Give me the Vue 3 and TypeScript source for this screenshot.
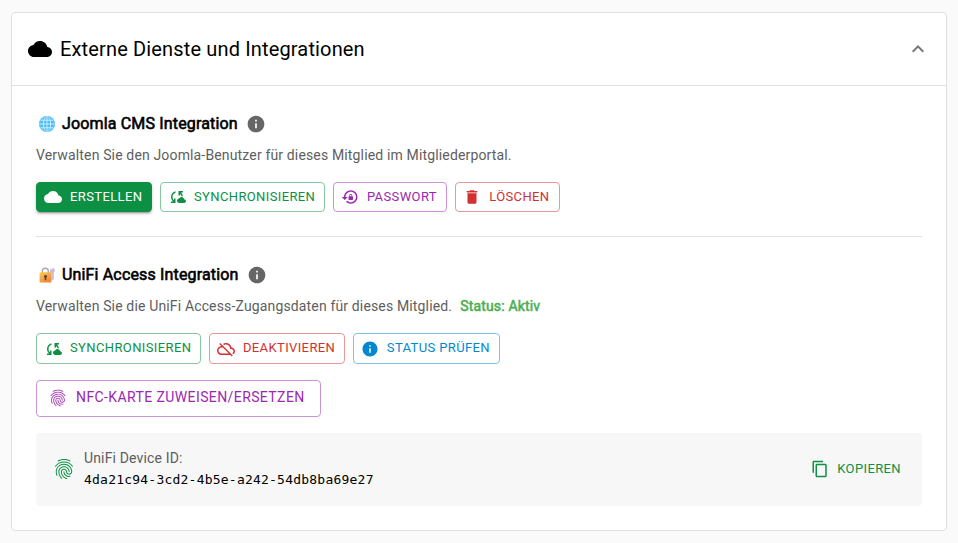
<script setup lang="ts">
import { ref } from 'vue'

interface Action {
  label: string
  icon: string
  tone: string
}

const icons: Record<string, string> = {
  cloud: 'M19.35 10.04C18.67 6.59 15.64 4 12 4 9.11 4 6.6 5.64 5.35 8.04 2.34 8.36 0 10.91 0 14c0 3.31 2.69 6 6 6h13c2.76 0 5-2.24 5-5 0-2.64-2.05-4.78-4.65-4.96z',
  sync: 'M21.5 14.98c-.02 0-.03 0-.05.01C21.2 13.3 19.76 12 18 12c-1.4 0-2.6.83-3.16 2.02C13.26 14.1 12 15.4 12 17c0 1.66 1.34 3 3 3l6.5-.02c1.38 0 2.5-1.12 2.5-2.5s-1.12-2.5-2.5-2.5zM10 4.26v2.09C7.67 7.18 6 9.39 6 12c0 1.77.78 3.34 2 4.44V14h2v6H4v-2h2.73C5.06 16.54 4 14.4 4 12c0-3.73 2.55-6.85 6-7.74zM20 6h-2.73c1.43 1.26 2.41 3.01 2.66 5h-2.02c-.23-1.36-.93-2.55-1.91-3.44V10h-2V4h6v2z',
  lockReset: 'M13 3c-4.97 0-9 4.03-9 9H1l4 4 4-4H6c0-3.86 3.14-7 7-7s7 3.14 7 7-3.14 7-7 7c-1.9 0-3.62-.76-4.88-1.99L6.7 18.42C8.32 20.01 10.55 21 13 21c4.97 0 9-4.03 9-9s-4.03-9-9-9zm2 8v-1c0-1.1-.9-2-2-2s-2 .9-2 2v1c-.55 0-1 .45-1 1v3c0 .55.45 1 1 1h4c.55 0 1-.45 1-1v-3c0-.55-.45-1-1-1zm-1 0h-2v-1c0-.55.45-1 1-1s1 .45 1 1v1z',
  trash: 'M6 19c0 1.1.9 2 2 2h8c1.1 0 2-.9 2-2V7H6v12zM19 4h-3.5l-1-1h-5l-1 1H5v2h14V4z',
  cloudOff: 'M19.35 10.04C18.67 6.59 15.64 4 12 4c-1.48 0-2.85.43-4.01 1.17l1.46 1.46C10.21 6.23 11.08 6 12 6c3.04 0 5.5 2.46 5.5 5.5v.5H19c1.66 0 3 1.34 3 3 0 1.13-.64 2.11-1.56 2.62l1.45 1.45C23.16 18.16 24 16.68 24 15c0-2.64-2.05-4.78-4.65-4.96zM3 5.27l2.75 2.74C2.56 8.15 0 10.77 0 14c0 3.31 2.69 6 6 6h11.73l2 2L21 20.73 4.27 4 3 5.27zM7.73 10l8 8H6c-2.21 0-4-1.79-4-4s1.79-4 4-4h1.73z',
  info: 'M12 2C6.48 2 2 6.48 2 12s4.48 10 10 10 10-4.48 10-10S17.52 2 12 2zm1 15h-2v-6h2v6zm0-8h-2V7h2v2z',
  fingerprint: 'M17.81 4.47c-.08 0-.16-.02-.23-.06C15.66 3.42 14 3 12.01 3c-1.98 0-3.86.47-5.57 1.41-.24.13-.54.04-.68-.2-.13-.24-.04-.55.2-.68C7.82 2.52 9.86 2 12.01 2c2.13 0 3.99.47 6.03 1.52.25.13.34.43.21.67-.09.18-.26.28-.44.28zM3.5 9.72c-.1 0-.2-.03-.29-.09-.23-.16-.28-.47-.12-.7.99-1.4 2.25-2.5 3.75-3.27C9.98 4.04 14 4.03 17.15 5.65c1.5.77 2.76 1.86 3.75 3.25.16.22.11.54-.12.7-.23.16-.54.11-.7-.12-.9-1.26-2.04-2.25-3.39-2.94-2.87-1.47-6.54-1.47-9.4.01-1.36.7-2.5 1.7-3.4 2.96-.08.14-.23.21-.39.21zm6.25 12.07c-.13 0-.26-.05-.35-.15-.87-.87-1.34-1.43-2.01-2.64-.69-1.23-1.05-2.73-1.05-4.34 0-2.97 2.54-5.39 5.66-5.39s5.66 2.42 5.66 5.39c0 .28-.22.5-.5.5s-.5-.22-.5-.5c0-2.42-2.09-4.39-4.66-4.39-2.57 0-4.66 1.97-4.66 4.39 0 1.44.32 2.77.93 3.85.64 1.15 1.08 1.64 1.85 2.42.19.2.19.51 0 .71-.11.1-.24.15-.37.15zm7.17-1.85c-1.19 0-2.24-.3-3.1-.89-1.49-1.01-2.38-2.65-2.38-4.39 0-.28.22-.5.5-.5s.5.22.5.5c0 1.41.72 2.74 1.94 3.56.71.48 1.54.71 2.54.71.24 0 .64-.03 1.04-.1.27-.05.53.13.58.41.05.27-.13.53-.41.58-.57.11-1.07.12-1.21.12zM14.91 22c-.04 0-.09-.01-.13-.02-1.59-.44-2.63-1.03-3.72-2.1-1.4-1.39-2.17-3.24-2.17-5.22 0-1.62 1.38-2.94 3.08-2.94 1.7 0 3.08 1.32 3.08 2.94 0 1.07.93 1.94 2.08 1.94s2.08-.87 2.08-1.94c0-3.77-3.25-6.83-7.25-6.83-2.84 0-5.44 1.58-6.61 4.03-.39.81-.59 1.76-.59 2.8 0 .78.07 2.01.67 3.61.1.26-.03.55-.29.64-.26.1-.55-.04-.64-.29-.49-1.31-.73-2.61-.73-3.96 0-1.2.23-2.29.68-3.24 1.33-2.79 4.28-4.6 7.51-4.6 4.55 0 8.25 3.51 8.25 7.83 0 1.62-1.38 2.94-3.08 2.94s-3.08-1.32-3.08-2.94c0-1.07-.93-1.94-2.08-1.94s-2.08.87-2.08 1.94c0 1.71.66 3.31 1.87 4.51.95.94 1.86 1.46 3.27 1.85.27.07.42.35.35.61-.05.23-.26.38-.47.38z',
  copy: 'M16 1H4c-1.1 0-2 .9-2 2v14h2V3h12V1zm3 4H8c-1.1 0-2 .9-2 2v14c0 1.1.9 2 2 2h11c1.1 0 2-.9 2-2V7c0-1.1-.9-2-2-2zm0 16H8V7h11v14z',
  expandLess: 'm12 8-6 6 1.41 1.41L12 10.83l4.59 4.58L18 14z',
}

const joomlaActions: Action[] = [
  { label: 'Erstellen', icon: 'cloud', tone: 'solid' },
  { label: 'Synchronisieren', icon: 'sync', tone: 'green' },
  { label: 'Passwort', icon: 'lockReset', tone: 'purple' },
  { label: 'Löschen', icon: 'trash', tone: 'red' },
]

const unifiActions: Action[] = [
  { label: 'Synchronisieren', icon: 'sync', tone: 'green' },
  { label: 'Deaktivieren', icon: 'cloudOff', tone: 'red' },
  { label: 'Status prüfen', icon: 'info', tone: 'blue' },
]

const deviceId = ref('4da21c94-3cd2-4b5e-a242-54db8ba69e27')
const open = ref(true)
</script>

<template>
  <main class="page">
    <section class="card">
      <header class="card-header" @click="open = !open">
        <svg class="icon-24" viewBox="0 0 24 24"><path :d="icons.cloud" /></svg>
        <h2 class="card-title">Externe Dienste und Integrationen</h2>
        <svg class="icon-24 chevron" viewBox="0 0 24 24"><path :d="icons.expandLess" /></svg>
      </header>

      <div v-if="open" class="card-body">
        <div class="heading">
          <svg class="emoji" viewBox="0 0 18 18">
            <circle cx="9" cy="9" r="8" fill="#4fbdf5" />
            <g fill="none" stroke="#d5f1ff" stroke-width="0.9">
              <ellipse cx="9" cy="9" rx="3.6" ry="7.6" />
              <circle cx="9" cy="9" r="7.3" stroke="#72caf7" />
              <path d="M9 1.5v15M1.5 9h15M2.8 5.2h12.4M2.8 12.8h12.4" />
            </g>
          </svg>
          <h3 class="heading-text">Joomla CMS Integration</h3>
          <svg class="info" viewBox="0 0 24 24"><path :d="icons.info" /></svg>
        </div>
        <p class="description">Verwalten Sie den Joomla-Benutzer für dieses Mitglied im Mitgliederportal.</p>
        <div class="actions">
          <button v-for="a in joomlaActions" :key="a.label" class="btn" :class="[a.tone, a.icon]">
            <svg class="btn-icon" viewBox="0 0 24 24"><path :d="icons[a.icon]" /></svg>
            <span>{{ a.label }}</span>
          </button>
        </div>

        <hr class="divider" />

        <div class="heading">
          <svg class="emoji" viewBox="0 0 18 18">
            <defs>
              <linearGradient id="lock-body" x1="0" y1="0" x2="0.6" y2="1">
                <stop offset="0" stop-color="#fdcd55" />
                <stop offset="1" stop-color="#f1843a" />
              </linearGradient>
            </defs>
            <path d="M12.2 2.6l1.6 1.2 1-1.9 1 .2 1.2 2.4-1.2 2.1v6.6l-1.3 1.2-1-1V7.4l-1.7-1.6z" fill="#c9bcd6" />
            <path d="M4.3 7.5V5.3a3 3 0 0 1 6 0v2.2" fill="none" stroke="#b3a3ac" stroke-width="1.4" />
            <rect x="1.6" y="6.2" width="11.8" height="10.4" rx="1.2" fill="url(#lock-body)" />
            <path d="M7.5 9a1.5 1.5 0 0 1 .8 2.8v2.4H6.7v-2.4A1.5 1.5 0 0 1 7.5 9z" fill="#5b4238" />
          </svg>
          <h3 class="heading-text">UniFi Access Integration</h3>
          <svg class="info" viewBox="0 0 24 24"><path :d="icons.info" /></svg>
        </div>
        <p class="description">
          Verwalten Sie die UniFi Access-Zugangsdaten für dieses Mitglied.
          <strong class="status">Status: Aktiv</strong>
        </p>
        <div class="actions tall">
          <button v-for="a in unifiActions" :key="a.label" class="btn" :class="a.tone">
            <svg class="btn-icon" viewBox="0 0 24 24"><path :d="icons[a.icon]" /></svg>
            <span>{{ a.label }}</span>
          </button>
        </div>
        <button class="btn purple large">
          <svg class="btn-icon" viewBox="0 0 24 24"><path :d="icons.fingerprint" /></svg>
          <span>NFC-Karte zuweisen/ersetzen</span>
        </button>

        <div class="device">
          <svg class="device-icon" viewBox="0 0 24 24"><path :d="icons.fingerprint" /></svg>
          <div class="device-text">
            <span class="device-label">UniFi Device ID:</span>
            <code class="device-id">{{ deviceId }}</code>
          </div>
          <button class="btn copy">
            <svg class="btn-icon" viewBox="0 0 24 24"><path :d="icons.copy" /></svg>
            <span>Kopieren</span>
          </button>
        </div>
      </div>
    </section>
  </main>
</template>

<style>
body {
  background: #fafafa;
}
</style>

<style scoped>
.page {
  box-sizing: border-box;
  height: 543px;
  padding: 12px 11px;
  font-family: Roboto, "Liberation Sans", sans-serif;
  color: #000;
}
svg {
  display: block;
  flex: none;
  fill: currentColor;
}
.card {
  box-sizing: border-box;
  height: 519px;
  border: 1px solid #e0e0e0;
  border-radius: 4px;
  background: #fff;
}
.card-header {
  display: flex;
  align-items: center;
  gap: 8px;
  height: 72px;
  padding: 0 16px;
  border-bottom: 1px solid #e0e0e0;
}
.icon-24 {
  width: 24px;
  height: 24px;
}
.card-title {
  flex: 1;
  margin: 0;
  font-size: 20px;
  font-weight: 400;
  line-height: 32px;
  letter-spacing: 0.15px;
}
.chevron {
  color: #757575;
}
.card-body {
  padding: 24px;
}
.heading {
  display: flex;
  align-items: center;
  height: 28px;
  padding-left: 2px;
}
.emoji {
  width: 18px;
  height: 18px;
  margin: -1px 6px 0 0;
}
.heading-text {
  margin: 0 8px 0 0;
  padding-bottom: 2px;
  font-size: 16px;
  font-weight: 400;
  letter-spacing: 0.16px;
  -webkit-text-stroke: 0.6px currentColor;
}
.info {
  width: 20px;
  height: 20px;
  color: #666;
}
.description {
  margin: 7px 0 17px;
  font-size: 14px;
  line-height: 20px;
  letter-spacing: 0.15px;
  color: #5e5e5e;
}
.status {
  margin-left: 4.5px;
  font-weight: 400;
  color: #4caf50;
  -webkit-text-stroke: 0.55px currentColor;
}
.actions {
  display: flex;
  gap: 8px;
}
.btn {
  display: flex;
  align-items: center;
  box-sizing: border-box;
  height: 30px;
  padding: 0 8.6px 0 9px;
  gap: 8px;
  border: 1px solid;
  border-radius: 4px;
  background: transparent;
  font-family: inherit;
  font-size: 13px;
  line-height: 22px;
  letter-spacing: 0.38px;
  text-transform: uppercase;
  white-space: nowrap;
}
.btn.trash {
  gap: 8.7px;
  padding-right: 9.4px;
}
.tall .btn {
  height: 31px;
}
.tall .btn span,
.copy span {
  padding-bottom: 2px;
}
.btn-icon {
  width: 18px;
  height: 18px;
  margin-left: -2px;
}
.solid {
  border-color: #0d9044;
  background: #0d9044;
  color: #fff;
  box-shadow: 0 3px 1px -2px rgba(0, 0, 0, 0.2), 0 2px 2px rgba(0, 0, 0, 0.14), 0 1px 5px rgba(0, 0, 0, 0.12);
}
.green {
  border-color: #86c7a1;
  color: #0d9044;
}
.purple {
  border-color: #cd93d7;
  color: #9c27b0;
}
.red {
  border-color: #e99696;
  color: #d32f2f;
}
.blue {
  border-color: #80c3e7;
  color: #0288d1;
}
.divider {
  height: 1px;
  margin: 24px 0;
  border: 0;
  background: #e0e0e0;
}
.large {
  height: 37px;
  margin-top: 16px;
  padding: 0 15px 1px 13px;
  font-size: 14px;
  letter-spacing: 0.4px;
}
.large span {
  padding-bottom: 3px;
}
.large .btn-icon {
  width: 20px;
  height: 20px;
}
.device {
  display: flex;
  align-items: center;
  box-sizing: border-box;
  height: 73px;
  margin-top: 16px;
  padding: 0 16px;
  border-radius: 4px;
  background: #f7f7f7;
}
.device-icon {
  width: 24px;
  height: 24px;
  margin-top: -1px;
  color: #0d9044;
}
.device-text {
  display: flex;
  flex: 1;
  flex-direction: column;
  margin-left: 8px;
}
.device-label {
  margin-top: -1px;
  font-size: 14px;
  line-height: 20px;
  letter-spacing: 0.15px;
  color: #5e5e5e;
}
.device-id {
  font-family: "DejaVu Sans Mono", "Liberation Mono", monospace;
  font-size: 13px;
  line-height: 23px;
  letter-spacing: 0.22px;
}
.copy {
  border-color: transparent;
  padding: 0 4px;
  color: #0d9044;
}
.copy .btn-icon {
  margin-top: -1px;
}
</style>
